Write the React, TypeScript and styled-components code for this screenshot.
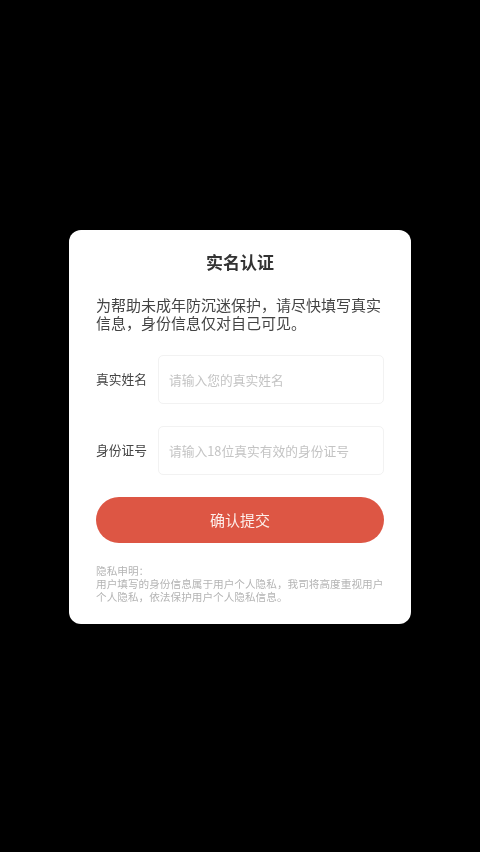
import React from "react";
import styled, { createGlobalStyle } from "styled-components";

const Global = createGlobalStyle`
  html, body { margin: 0; padding: 0; background: #000; }
  #root { width: 480px; height: 852px; }
`;

const Overlay = styled.div`
  width: 480px;
  height: 852px;
  background: #000;
  display: flex;
  justify-content: center;
  align-items: flex-start;
  padding-top: 230px;
  box-sizing: border-box;
  font-family: "Noto Sans CJK SC", "Liberation Sans", sans-serif;
`;

const Card = styled.div`
  width: 342px;
  height: 394px;
  box-sizing: border-box;
  background: #fff;
  border-radius: 12px;
  padding: 21px 27px 0;
  display: flex;
  flex-direction: column;
  filter: blur(0.7px);
`;

const Title = styled.h1`
  margin: 0;
  font-size: 17px;
  line-height: 21px;
  font-weight: 700;
  color: #333;
  text-align: center;
`;

const Intro = styled.p`
  margin: 24px 0 0;
  font-size: 15px;
  line-height: 18px;
  color: #444;
  width: 288px;
`;

const Form = styled.div`
  margin-top: 23px;
  display: flex;
  flex-direction: column;
  gap: 22px;
`;

const Row = styled.label`
  display: flex;
  align-items: center;
  gap: 11px;
`;

const Label = styled.span`
  flex: none;
  width: 51px;
  font-size: 12.75px;
  line-height: 18px;
  color: #444;
  white-space: nowrap;
  padding-bottom: 1px;
`;

const Field = styled.div`
  flex: none;
  width: 226px;
  height: 49px;
  box-sizing: border-box;
  border: 1px solid #f2f2f2;
  border-radius: 5px;
  background: #fff;
  padding: 0 10px 1px;
  display: flex;
  align-items: center;
  font-size: 12.75px;
  color: #c4c4c4;
  white-space: nowrap;
`;

const Submit = styled.button`
  margin-top: 22px;
  width: 288px;
  height: 46px;
  flex: none;
  border: none;
  border-radius: 23px;
  background: #dd5644;
  color: #fdeeea;
  font-family: inherit;
  font-size: 15px;
  padding: 0 0 2px;
`;

const Privacy = styled.div`
  margin-top: 21px;
  font-size: 10.65px;
  line-height: 13px;
  color: #b4b4b4;
  width: 289px;
`;

export default function App() {
  return (
    <>
      <Global />
      <Overlay>
        <Card>
          <Title>实名认证</Title>
          <Intro>为帮助未成年防沉迷保护，请尽快填写真实信息，身份信息仅对自己可见。</Intro>
          <Form>
            <Row>
              <Label>真实姓名</Label>
              <Field>请输入您的真实姓名</Field>
            </Row>
            <Row>
              <Label>身份证号</Label>
              <Field>请输入18位真实有效的身份证号</Field>
            </Row>
          </Form>
          <Submit>确认提交</Submit>
          <Privacy>
            隐私申明：
            <br />
            用户填写的身份信息属于用户个人隐私，我司将高度重视用户个人隐私，依法保护用户个人隐私信息。
          </Privacy>
        </Card>
      </Overlay>
    </>
  );
}
